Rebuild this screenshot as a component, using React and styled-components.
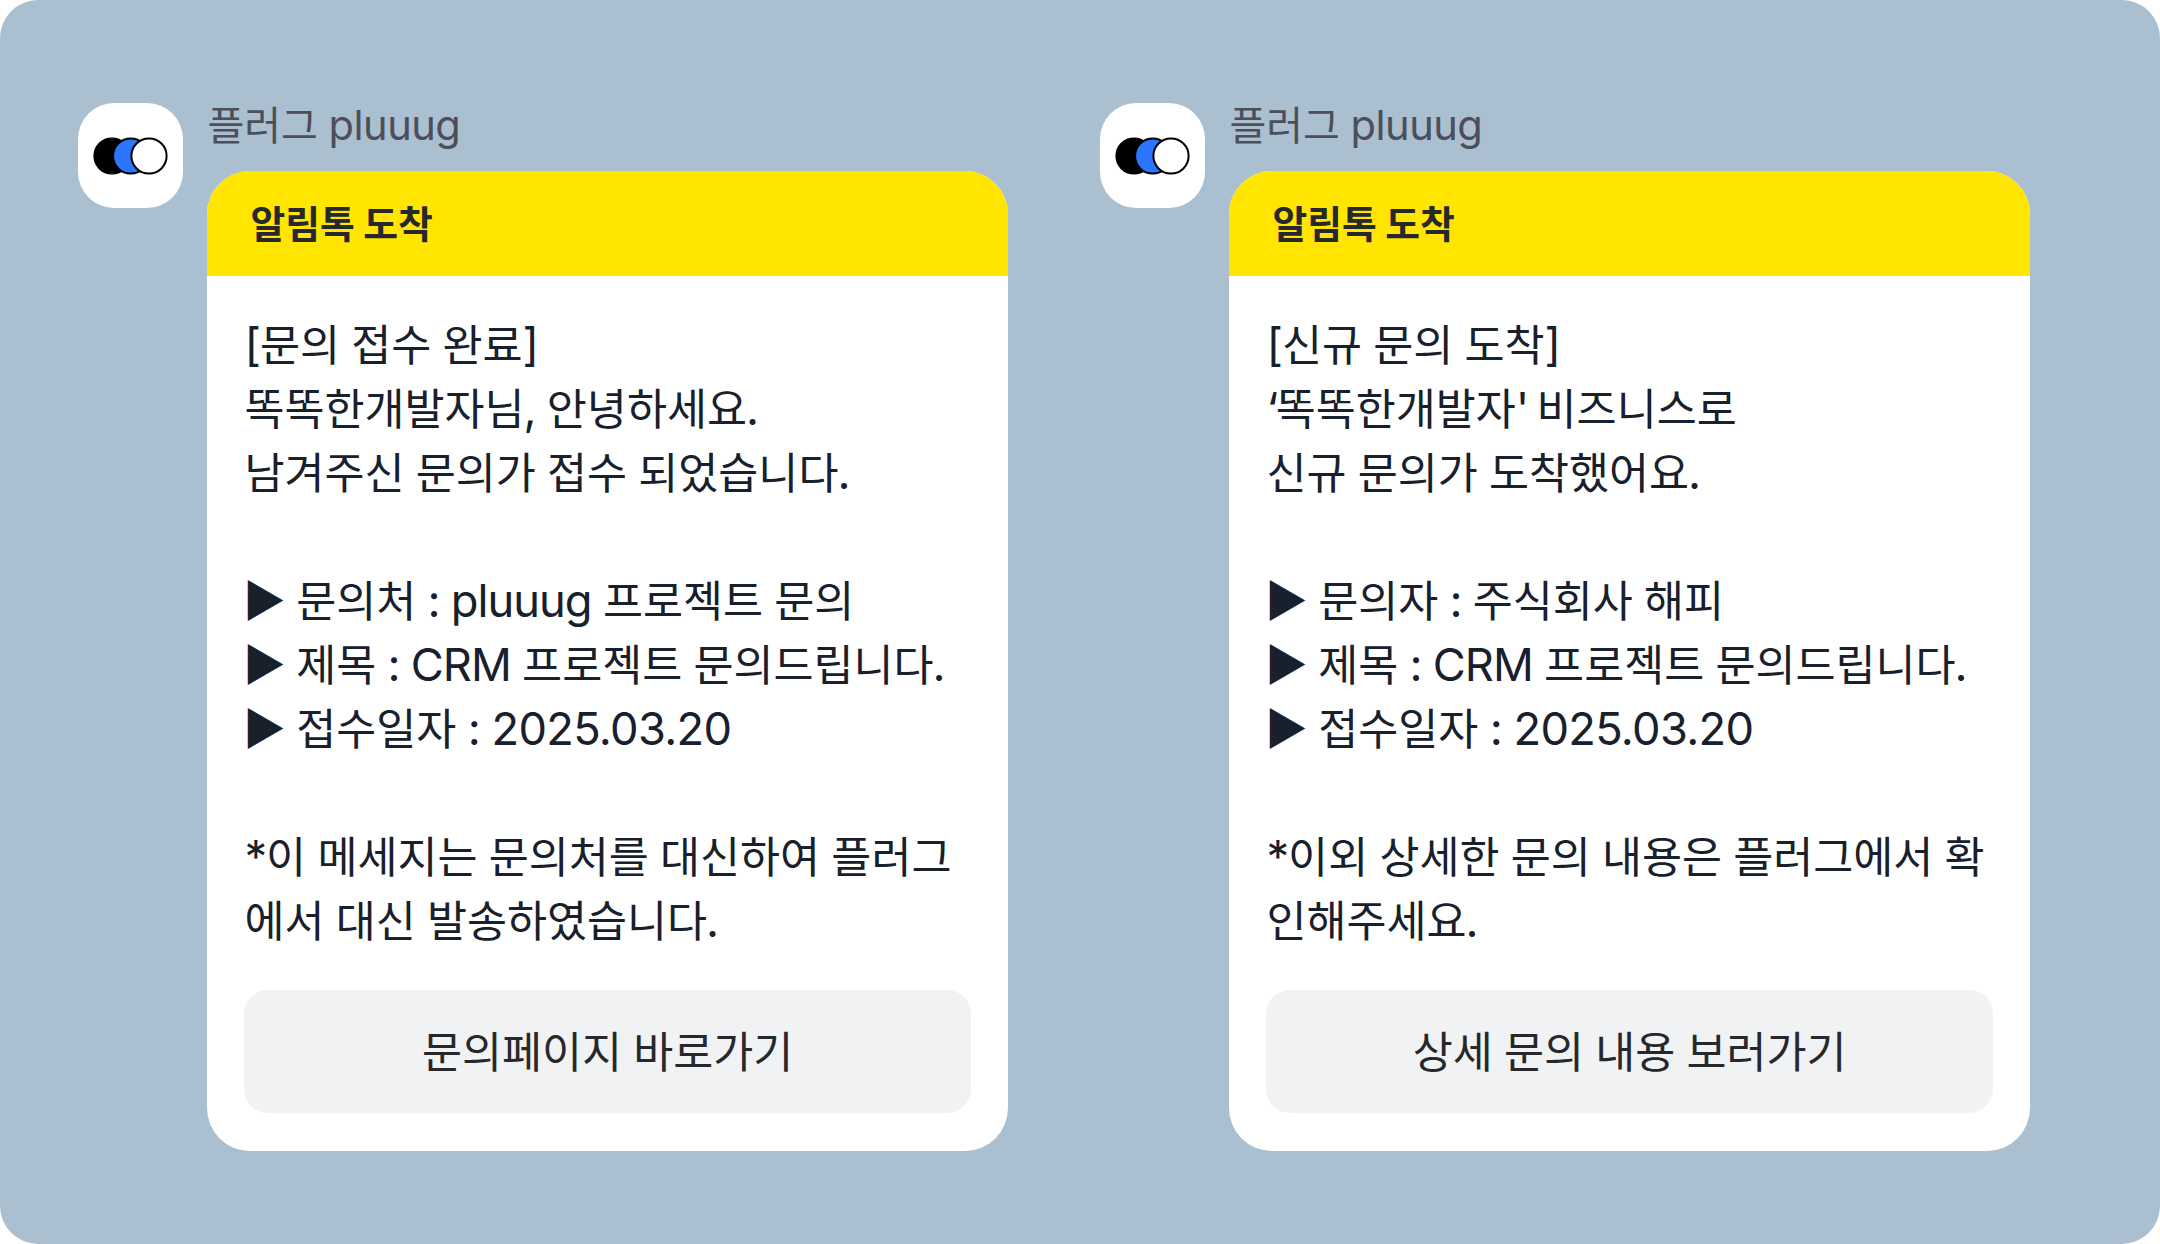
import { Fragment } from "react";
import styled, { createGlobalStyle } from "styled-components";

const messages = [
  {
    lines: [
      "[문의 접수 완료]",
      "똑똑한개발자님, 안녕하세요.",
      "남겨주신 문의가 접수 되었습니다.",
      "",
      "▶ 문의처 : pluuug 프로젝트 문의",
      "▶ 제목 : CRM 프로젝트 문의드립니다.",
      "▶ 접수일자 : 2025.03.20",
      "",
      "*이 메세지는 문의처를 대신하여 플러그",
      "에서 대신 발송하였습니다.",
    ],
    button: "문의페이지 바로가기",
  },
  {
    lines: [
      "[신규 문의 도착]",
      "‘똑똑한개발자' 비즈니스로",
      "신규 문의가 도착했어요.",
      "",
      "▶ 문의자 : 주식회사 해피",
      "▶ 제목 : CRM 프로젝트 문의드립니다.",
      "▶ 접수일자 : 2025.03.20",
      "",
      "*이외 상세한 문의 내용은 플러그에서 확",
      "인해주세요.",
    ],
    button: "상세 문의 내용 보러가기",
  },
];

function getTracking(part) {
  if (/\d/.test(part)) return "-0.015em";
  if (/[‘']/.test(part)) return "-0.055em";
  return "-0.021em";
}

// Latin runs are set a little larger than the Hangul around them
function Mixed({ children, tracking }) {
  return children.split(/([\x20-\x7e‘]+|▶)/).map((part, i) => {
    if (part === "▶") return <Arrow key={i}>{part}</Arrow>;
    if (i % 2 === 1)
      return (
        <Latin
          key={i}
          $tracking={tracking || getTracking(part)}
          $shift={/^[.,]/.test(part)}
        >
          {part}
        </Latin>
      );
    return <Fragment key={i}>{part}</Fragment>;
  });
}

function Logo() {
  return (
    <svg width="76" height="40" viewBox="0 0 76 40" stroke="#000" strokeWidth="2">
      <circle cx="19" cy="20" r="17.6" fill="#000" />
      <circle cx="37.7" cy="20" r="17.6" fill="#2b76ff" />
      <circle cx="56" cy="20" r="17.6" fill="#fff" />
    </svg>
  );
}

function Message({ lines, button }) {
  return (
    <Chat>
      <Avatar>
        <Logo />
      </Avatar>
      <Content>
        <Name>
          <Mixed tracking="-0.012em">플러그 pluuug</Mixed>
        </Name>
        <Card>
          <Title>
            <Mixed>알림톡 도착</Mixed>
          </Title>
          <Body>
            {lines.map((line, i) => (
              <Line key={i}>
                <Mixed>{line}</Mixed>
              </Line>
            ))}
            <Button>
              <Mixed>{button}</Mixed>
            </Button>
          </Body>
        </Card>
      </Content>
    </Chat>
  );
}

export default function App() {
  return (
    <>
      <GlobalStyle />
      <Board>
        {messages.map((message) => (
          <Message key={message.button} {...message} />
        ))}
      </Board>
    </>
  );
}

const GlobalStyle = createGlobalStyle`
  * {
    box-sizing: border-box;
  }

  body {
    margin: 0;
    background-color: #fff;
    font-family: "Noto Sans CJK KR", sans-serif;
  }
`;

const Board = styled.main`
  width: 2160px;
  height: 1244px;
  padding: 103px 0 0 78px;
  display: flex;
  gap: 92px;
  border-radius: 38px;
  background-color: #aabfd0;
`;

const Chat = styled.section`
  width: 930px;
  display: flex;
  align-items: flex-start;
  gap: 24.4px;
`;

const Avatar = styled.div`
  width: 105px;
  height: 105px;
  flex-shrink: 0;
  display: flex;
  justify-content: center;
  align-items: center;
  border-radius: 36px;
  background-color: #fff;
`;

const Content = styled.div`
  width: 800.6px;
`;

const Name = styled.p`
  height: 68px;
  margin: 0;
  font-size: 40px;
  line-height: 40px;
  color: #4c4f59;
`;

const Card = styled.div`
  height: 979.5px;
  border-radius: 43px;
  overflow: hidden;
  background-color: #fff;
`;

const Title = styled.h2`
  height: 105px;
  margin: 0;
  padding: 0 0 5px 43px;
  display: flex;
  align-items: center;
  background-color: #ffe500;
  font-size: 37.8px;
  font-weight: 600;
  white-space: pre;
  color: #27282c;
`;

const Body = styled.div`
  padding: 35px 37px 0;
  color: #18202b;
  font-size: 43.5px;
`;

const Line = styled.p`
  height: 64px;
  margin: 0;
  line-height: 64px;
  white-space: pre;
`;

const Latin = styled.span`
  margin-left: ${({ $shift }) => ($shift ? "-1px" : "0")};
  font-family: Inter, "Noto Sans CJK KR", sans-serif;
  font-size: 1.04em;
  line-height: 1;
  letter-spacing: ${({ $tracking }) => $tracking};
  word-spacing: -0.012em;
`;

const Arrow = styled.span`
  margin: 0 -1px 0 -2px;
  line-height: 1;
`;

const Button = styled.button`
  width: 100%;
  height: 123.5px;
  margin-top: 38.5px;
  padding: 0 0 4px;
  border: 0;
  border-radius: 24px;
  background-color: #f1f2f4;
  color: #27282c;
  font: inherit;
`;
